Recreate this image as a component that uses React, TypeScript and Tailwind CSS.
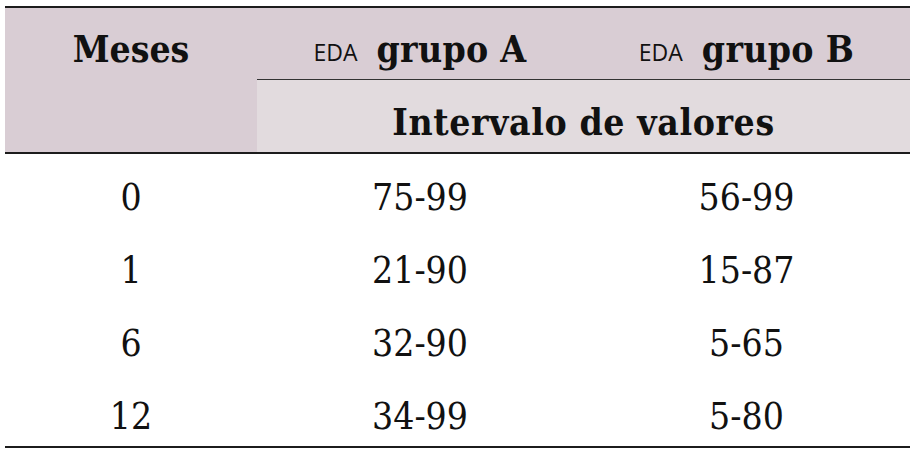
import React from "react";

const serif = "font-['DejaVu_Serif_Condensed','DejaVu_Serif',serif]";
const sans = "font-['Open_Sans','Noto_Sans',sans-serif]";

const rows = [
  { mes: "0", a: "75-99", b: "56-99" },
  { mes: "1", a: "21-90", b: "15-87" },
  { mes: "6", a: "32-90", b: "5-65" },
  { mes: "12", a: "34-99", b: "5-80" },
];

const GroupHead = ({ label }: { label: string }) => (
  <div className="flex items-center justify-center pt-[13px]">
    <span className={`${sans} text-[23px] mr-[19px] mt-[4px]`}>EDA</span>
    <span className={`${serif} font-bold text-[37px] tracking-[0.3px]`}>{label}</span>
  </div>
);

export default function App() {
  return (
    <div className="bg-white min-h-[451px] pl-[5px] pt-[6px] text-[#111]">
      <div className={`w-[905px] border-t-2 border-b-2 border-[#1c1c1c] ${serif}`}>
        {/* header */}
        <div className="grid grid-cols-[252px_326px_327px] grid-rows-[71px_73px] bg-[#d9cdd4] border-b-2 border-[#1c1c1c]">
          <div className="flex items-center justify-center pt-[13px] font-bold text-[37px]">Meses</div>
          <GroupHead label="grupo A" />
          <GroupHead label="grupo B" />
          <div />
          <div className="col-span-2 bg-[#e2dbde] border-t border-[#333] flex items-center justify-center pt-[13px] font-bold text-[37px] tracking-[0.6px]">
            Intervalo de valores
          </div>
        </div>

        {/* body */}
        {rows.map((r) => (
          <div key={r.mes} className="grid grid-cols-[252px_326px_327px] h-[73px] text-[37px]">
            <div className="flex items-center justify-center pt-[15px]">{r.mes}</div>
            <div className="flex items-center justify-center pt-[15px]">{r.a}</div>
            <div className="flex items-center justify-center pt-[15px]">{r.b}</div>
          </div>
        ))}
      </div>
    </div>
  );
}
